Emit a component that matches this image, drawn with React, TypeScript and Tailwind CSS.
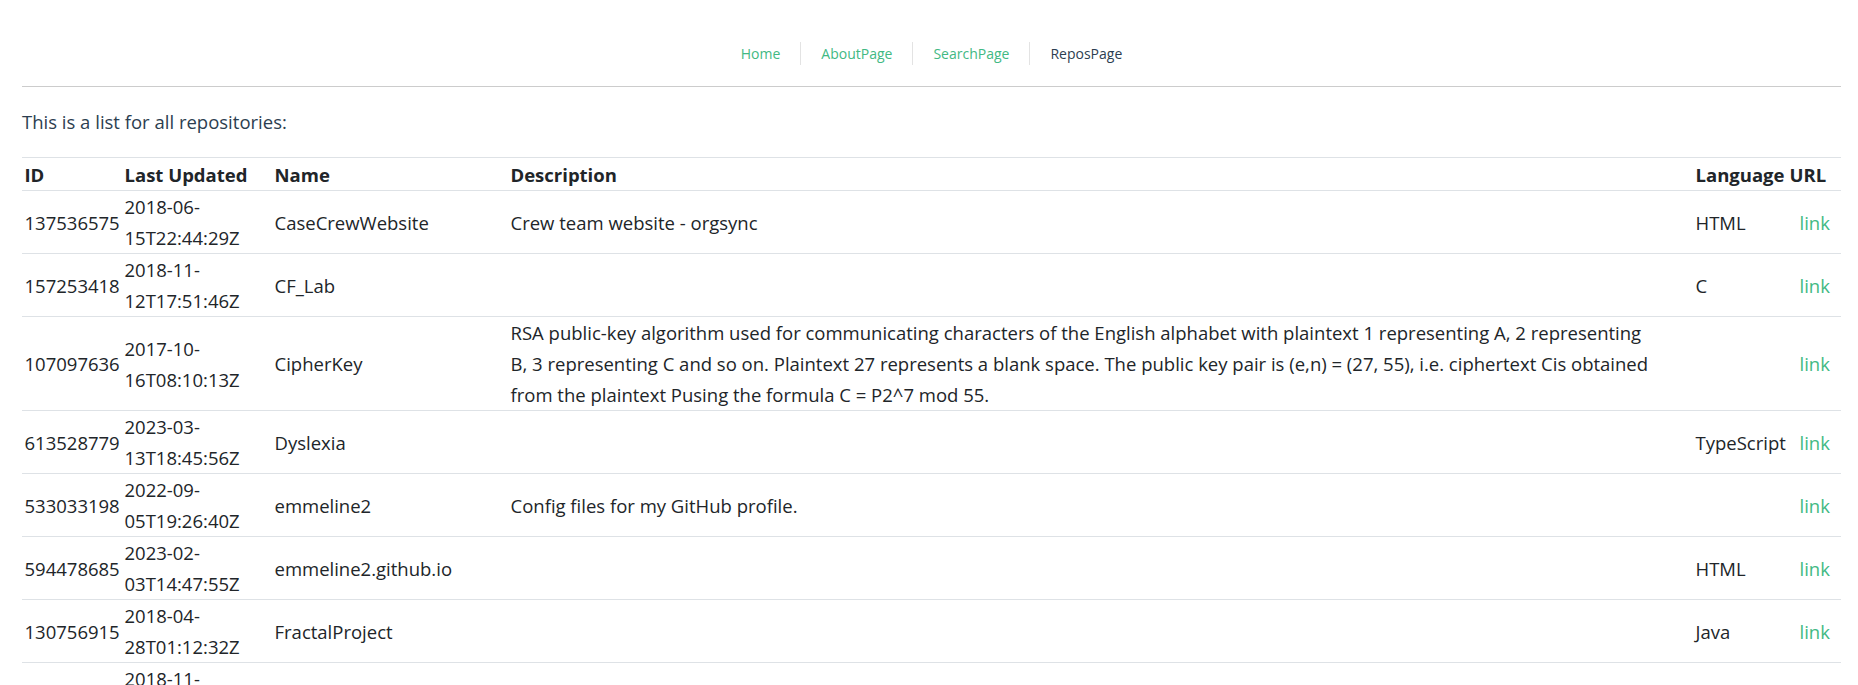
import React from "react";

type Repo = {
  id: string;
  updated: string;
  name: string;
  description: string[];
  language: string;
};

const repos: Repo[] = [
  {
    id: "137536575",
    updated: "2018-06-15T22:44:29Z",
    name: "CaseCrewWebsite",
    description: ["Crew team website - orgsync"],
    language: "HTML",
  },
  {
    id: "157253418",
    updated: "2018-11-12T17:51:46Z",
    name: "CF_Lab",
    description: [],
    language: "C",
  },
  {
    id: "107097636",
    updated: "2017-10-16T08:10:13Z",
    name: "CipherKey",
    description: [
      "RSA public-key algorithm used for communicating characters of the English alphabet with plaintext 1 representing A, 2 representing",
      "B, 3 representing C and so on. Plaintext 27 represents a blank space. The public key pair is (e,n) = (27, 55), i.e. ciphertext Cis obtained",
      "from the plaintext Pusing the formula C = P2^7 mod 55.",
    ],
    language: "",
  },
  {
    id: "613528779",
    updated: "2023-03-13T18:45:56Z",
    name: "Dyslexia",
    description: [],
    language: "TypeScript",
  },
  {
    id: "533033198",
    updated: "2022-09-05T19:26:40Z",
    name: "emmeline2",
    description: ["Config files for my GitHub profile."],
    language: "",
  },
  {
    id: "594478685",
    updated: "2023-02-03T14:47:55Z",
    name: "emmeline2.github.io",
    description: [],
    language: "HTML",
  },
  {
    id: "130756915",
    updated: "2018-04-28T01:12:32Z",
    name: "FractalProject",
    description: [],
    language: "Java",
  },
  {
    id: "157253597",
    updated: "2018-11-12T17:53:08Z",
    name: "Graphics_Lab",
    description: [],
    language: "C++",
  },
  {
    id: "144810062",
    updated: "2018-08-15T03:20:51Z",
    name: "MusicPlayer",
    description: [],
    language: "JavaScript",
  },
];

const navLinks = [
  { name: "Home", active: false },
  { name: "AboutPage", active: false },
  { name: "SearchPage", active: false },
  { name: "ReposPage", active: true },
];

const Nav = () => {
  return (
    <nav className="flex justify-center border-b border-[#cccccc] pt-[42px] pb-[21px] text-[14px]">
      {navLinks.map((link, index) => (
        <a
          key={index}
          href="#"
          className={
            "border-l border-[#e3e3e3] px-5 leading-[23px] first:border-l-0 " +
            (link.active ? "text-[#2c3e50]" : "text-[#42b983]")
          }
        >
          {link.name}
        </a>
      ))}
    </nav>
  );
};

const ReposTable = () => {
  return (
    <table className="w-full table-fixed border-collapse text-left text-[18.5px] leading-[31px] text-[#212529]">
      <colgroup>
        <col className="w-[100px]" />
        <col className="w-[150px]" />
        <col className="w-[236px]" />
        <col />
        <col className="w-[94px]" />
        <col className="w-[54px]" />
      </colgroup>
      <thead>
        <tr className="border-t border-[#dee2e6]">
          <th className="px-[2.5px] pt-px font-bold">ID</th>
          <th className="px-[2.5px] pt-px font-bold">Last Updated</th>
          <th className="px-[2.5px] pt-px font-bold">Name</th>
          <th className="px-[2.5px] pt-px font-bold">Description</th>
          <th className="px-[2.5px] pt-px font-bold whitespace-nowrap">Language</th>
          <th className="px-[2.5px] pt-px font-bold">URL</th>
        </tr>
      </thead>
      <tbody>
        {repos.map((repo) => (
          <tr key={repo.id} className="border-t border-[#dee2e6]">
            <td className="px-[2.5px] align-middle">{repo.id}</td>
            <td className="px-[2.5px] align-middle">
              {repo.updated.slice(0, 8)}
              <br />
              {repo.updated.slice(8)}
            </td>
            <td className="px-[2.5px] align-middle">{repo.name}</td>
            <td className="px-[2.5px] align-middle">
              {repo.description.map((line, i) => (
                <div key={i} className="whitespace-nowrap">
                  {line}
                </div>
              ))}
            </td>
            <td className="px-[2.5px] align-middle whitespace-nowrap">
              {repo.language}
            </td>
            <td className="px-[2.5px] align-middle">
              <a href="#" className="pl-[10px] text-[#42b983]">
                link
              </a>
            </td>
          </tr>
        ))}
      </tbody>
    </table>
  );
};

export default function App() {
  return (
    <div className="min-h-screen bg-white pl-[22px] pr-[17px] font-['Open_Sans',sans-serif] text-[#2c3e50]">
      <Nav />
      <p className="my-5 text-[18.5px] leading-[30px]">
        This is a list for all repositories:
      </p>
      <ReposTable />
    </div>
  );
}
